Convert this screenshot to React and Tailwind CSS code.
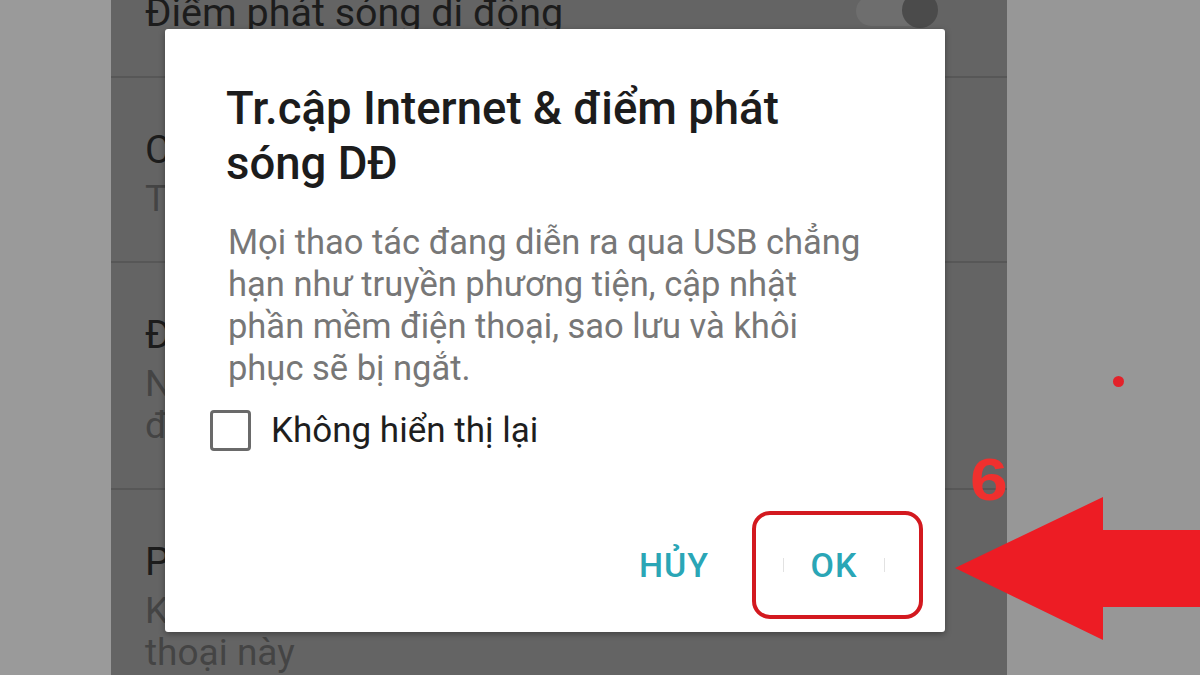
const rows = [
    { title: 'Chia sẻ kết nối qua USB', sub: ['Tắt'], h: 'h-[185px]' },
    { title: 'Điểm truy cập Bluetooth', sub: ['Nhấn để chia sẻ kết nối Internet của', 'điện thoại này'], h: 'h-[227px]' },
    { title: 'Phát qua Bluetooth', sub: ['Kết nối Internet của điện', 'thoại này'], h: 'h-[200px]' },
];

const App = () => {
    return (
        <div className="relative w-[1200px] h-[675px] overflow-hidden flex bg-[#979797] font-['Roboto','Noto_Sans',sans-serif]">
            {/* left margin */}
            <div className="w-[111px] shrink-0 bg-[#9a9a9a]" />

            {/* phone screen, dimmed */}
            <div className="relative w-[896px] shrink-0 bg-[#646464] overflow-hidden">
                {/* settings list */}
                <div className="flex flex-col">
                    <div className="h-[78px] border-b-2 border-[#575757] flex items-start justify-between pl-[34px] pr-[69px]">
                        <span className="-mt-[9px] text-[39.5px] leading-[44px] text-[#1c1c1c]">Điểm phát sóng di động</span>
                        <div className="relative -mt-[8px] w-[82px] h-[36px]">
                            <div className="absolute left-0 top-[4px] w-[70px] h-[30px] rounded-full bg-[#6e6e6e]" />
                            <div className="absolute right-0 top-0 w-[36px] h-[36px] rounded-full bg-[#4b4b4b]" />
                        </div>
                    </div>
                    {rows.map((row) => (
                        <div key={row.title} className={`${row.h} border-b-2 border-[#575757] pl-[34px] pt-[50px]`}>
                            <div className="text-[39.5px] leading-[44px] text-[#1c1c1c]">{row.title}</div>
                            <div className="mt-[6px] text-[37px] leading-[42px] text-[#444]">
                                {row.sub.map((line) => (
                                    <div key={line}>{line}</div>
                                ))}
                            </div>
                        </div>
                    ))}
                </div>

                {/* dialog */}
                <div className="absolute left-[54px] top-[29px] w-[780px] h-[603px] bg-white rounded-[3px] shadow-[0_2px_6px_rgba(0,0,0,0.35)] flex flex-col">
                    <h2 className="pl-[61px] pt-[52px] pr-[110px] text-[45.5px] leading-[55px] font-medium text-[#1c1c1c]">
                        Tr.cập Internet &amp; điểm phát sóng DĐ
                    </h2>
                    <p className="mt-[30px] pl-[63px] pr-[76px] text-[34.5px] leading-[42px] text-[#777]">
                        Mọi thao tác đang diễn ra qua USB chẳng hạn như truyền phương tiện, cập nhật phần mềm điện thoại, sao lưu và khôi phục sẽ bị ngắt.
                    </p>
                    <label className="mt-[21px] ml-[45px] flex items-center gap-[20px]">
                        <span className="w-[41px] h-[41px] rounded-[4px] border-[3px] border-[#6a6a6a]" />
                        <span className="text-[35px] leading-[40px] text-[#1e1e1e]">Không hiển thị lại</span>
                    </label>

                    {/* buttons */}
                    <div className="mt-auto pb-[42px] pr-[60px] flex justify-end items-center gap-[58px]">
                        <button className="w-[102px] h-[50px] text-[34px] tracking-[1px] font-medium text-[#2aa6b6]">HỦY</button>
                        <button className="relative w-[102px] h-[50px] text-[34px] tracking-[1px] font-medium text-[#2aa6b6]">
                            <span className="absolute left-0 top-[18px] w-px h-[14px] bg-[#e2e2e2]" />
                            OK
                            <span className="absolute right-0 top-[18px] w-px h-[14px] bg-[#e2e2e2]" />
                        </button>
                    </div>
                </div>
            </div>

            {/* right margin */}
            <div className="flex-1 bg-[#979797]" />

            {/* annotations */}
            <div className="absolute left-[752px] top-[511px] w-[171px] h-[108px] rounded-[18px] border-[4px] border-[#d3191f]" />
            <span className="absolute left-[970px] top-[451px] text-[59px] leading-none font-bold text-[#f0302e] font-['Liberation_Sans',Arial,sans-serif] scale-x-[1.15] origin-left">6</span>
            <svg className="absolute left-[950px] top-[490px]" width="250" height="155" viewBox="0 0 250 155">
                <polygon points="5,78 153,7 153,40 250,40 250,117 153,117 153,150" fill="#ed1c24" />
            </svg>
            <div className="absolute left-[1113px] top-[376px] w-[11px] h-[11px] rounded-full bg-[#e3222a]" />
        </div>
    );
};

export default App;
